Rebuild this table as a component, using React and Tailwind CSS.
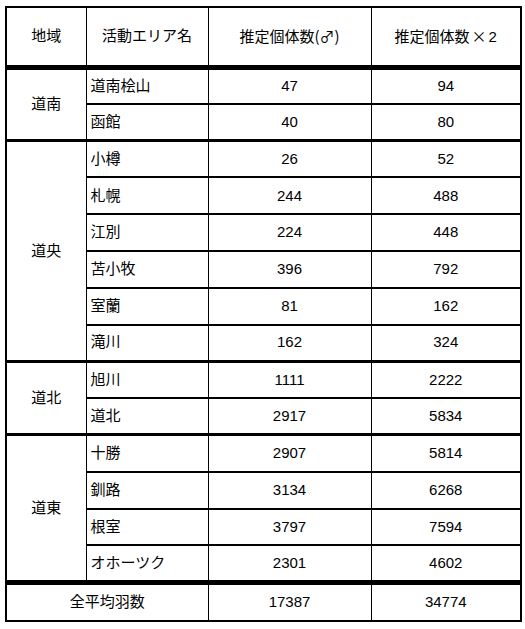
import React from "react";

const groups = [
  {
    name: "道南",
    rows: [
      ["道南桧山", "47", "94"],
      ["函館", "40", "80"],
    ],
  },
  {
    name: "道央",
    rows: [
      ["小樽", "26", "52"],
      ["札幌", "244", "488"],
      ["江別", "224", "448"],
      ["苫小牧", "396", "792"],
      ["室蘭", "81", "162"],
      ["滝川", "162", "324"],
    ],
  },
  {
    name: "道北",
    rows: [
      ["旭川", "1111", "2222"],
      ["道北", "2917", "5834"],
    ],
  },
  {
    name: "道東",
    rows: [
      ["十勝", "2907", "5814"],
      ["釧路", "3134", "6268"],
      ["根室", "3797", "7594"],
      ["オホーツク", "2301", "4602"],
    ],
  },
];

export default function App() {
  return (
    <div className="bg-white w-[525px] h-[629px] pt-[6px] pl-[5px] text-black text-[15px] font-['Liberation_Sans','Noto_Sans_CJK_JP',sans-serif]">
      <table className="border-collapse table-fixed w-[515px] border-2 border-black">
        <colgroup>
          <col className="w-[80px]" />
          <col className="w-[122px]" />
          <col className="w-[163px]" />
          <col className="w-[150px]" />
        </colgroup>
        <thead>
          <tr className="h-[60px]">
            <th className="font-normal text-center border border-black border-l-2">地域</th>
            <th className="font-normal text-center border border-black">活動エリア名</th>
            <th className="font-normal text-center border border-black">
              推定個体数
              <span className="font-['Noto_Sans_CJK_JP',sans-serif]">(♂)</span>
            </th>
            <th className="font-normal text-center border border-black border-r-2">
              推定個体数<span className="font-['Noto_Sans_CJK_JP',sans-serif] mx-[2px]">×</span>2
            </th>
          </tr>
        </thead>
        <tbody>
          {groups.map((g, gi) =>
            g.rows.map((r, ri) => {
              const top = ri === 0 ? (gi === 0 ? "border-t-[5px]" : "border-t-[3px]") : "border-t-2";
              return (
                <tr key={g.name + r[0]} className="h-[36.8px]">
                  {ri === 0 && (
                    <td
                      rowSpan={g.rows.length}
                      className={`text-center border border-black border-l-2 ${top}`}
                    >
                      {g.name}
                    </td>
                  )}
                  <td className={`pl-[4px] text-left border border-black ${top}`}>{r[0]}</td>
                  <td className={`text-center border border-black ${top}`}>{r[1]}</td>
                  <td className={`text-center border border-black border-r-2 ${top}`}>{r[2]}</td>
                </tr>
              );
            })
          )}
          <tr className="h-[39px]">
            <td colSpan={2} className="text-center border border-black border-l-2 border-t-[5px] border-b-2">
              全平均羽数
            </td>
            <td className="text-center border border-black border-t-[5px] border-b-2">17387</td>
            <td className="text-center border border-black border-r-2 border-t-[5px] border-b-2">34774</td>
          </tr>
        </tbody>
      </table>
    </div>
  );
}
